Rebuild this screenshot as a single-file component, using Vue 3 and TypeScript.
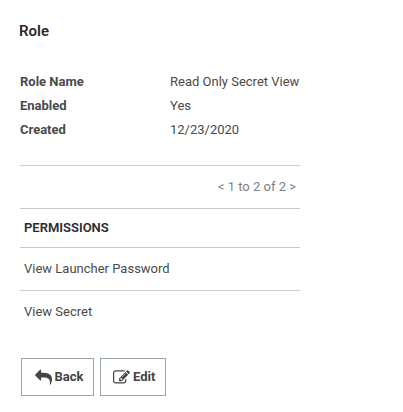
<script setup lang="ts">
interface Detail {
  label: string
  value: string
}

const details: Detail[] = [
  { label: 'Role Name', value: 'Read Only Secret View' },
  { label: 'Enabled', value: 'Yes' },
  { label: 'Created', value: '12/23/2020' },
]

const permissions: string[] = ['View Launcher Password', 'View Secret']
</script>

<template>
  <main class="page">
    <h1 class="title">Role</h1>

    <dl class="details">
      <div v-for="item in details" :key="item.label" class="detail">
        <dt>{{ item.label }}</dt>
        <dd>{{ item.value }}</dd>
      </div>
    </dl>

    <section class="grid">
      <div class="pager">&lt; 1 to 2 of 2 &gt;</div>
      <h2 class="head">PERMISSIONS</h2>
      <div v-for="name in permissions" :key="name" class="row">{{ name }}</div>
    </section>

    <div class="actions">
      <button type="button" class="btn back">
        <svg class="icon" viewBox="0 0 1792 1792" aria-hidden="true">
          <path d="M1792 1120q0 166-127 451-3 7-10.5 24t-13.5 30-13 22q-12 17-28 17-15 0-23.5-10t-8.5-25q0-9 2.5-26.5t2.5-23.5q5-68 5-123 0-101-17.500-181t-48.500-138.500-80-101-105.500-69.500-133-42.500-154-21.500-175.500-6h-224v256q0 26-19 45t-45 19-45-19l-512-512q-19-19-19-45t19-45l512-512q19-19 45-19t45 19 19 45v256h224q713 0 875 403 53 134 53 333z" />
        </svg>
        <span>Back</span>
      </button>
      <button type="button" class="btn edit">
        <svg class="icon" viewBox="0 0 1792 1792" aria-hidden="true">
          <path d="M888 1184l116-116-152-152-116 116v56h96v96h56zm440-720q-16-16-33 1l-350 350q-17 17-1 33t33-1l350-350q17-17 1-33zm80 594v190q0 119-84.500 203.500t-203.500 84.500h-832q-119 0-203.500-84.500t-84.500-203.500v-832q0-119 84.500-203.500t203.500-84.500h832q63 0 117 25 15 7 18 23 3 17-9 29l-49 49q-14 14-32 8-23-6-45-6h-832q-66 0-113 47t-47 113v832q0 66 47 113t113 47h832q66 0 113-47t47-113v-126q0-13 9-22l64-64q15-15 35-7t20 29zm-96-738l288 288-672 672h-288v-288zm444 132l-92 92-288-288 92-92q28-28 68-28t68 28l152 152q28 28 28 68t-28 68z" />
        </svg>
        <span>Edit</span>
      </button>
    </div>
  </main>
</template>

<style>
body {
  background: #fff;
}
</style>

<style scoped>
.page {
  box-sizing: border-box;
  padding: 20px 0 0 20px;
  width: 300px;
  font-family: Roboto, "Liberation Sans", sans-serif;
  font-size: 13px;
  color: #4a4a4a;
}

.title {
  margin: 0 0 0 -1px;
  font-size: 15px;
  line-height: 22px;
  font-weight: 600;
  color: #2b2b2b;
}

.details {
  margin: 28px 0 0;
}

.detail {
  display: grid;
  grid-template-columns: 150px 1fr;
  line-height: 24px;
  white-space: nowrap;
}

dt {
  font-weight: 700;
}

dd {
  margin: 0;
}

.grid {
  margin-top: 23px;
}

.pager,
.head,
.row {
  box-sizing: border-box;
  display: flex;
  align-items: center;
  border-top: 1px solid #ccc;
  padding: 0 4px 2px;
  height: 43px;
}

.pager {
  justify-content: flex-end;
  color: #808080;
}

.head {
  margin: 0;
  height: 39px;
  font-size: 13px;
  font-weight: 600;
  color: #2b2b2b;
}

.actions {
  display: flex;
  gap: 6px;
  padding: 25px 0 0 1px;
}

.btn {
  box-sizing: border-box;
  display: flex;
  align-items: center;
  border: 1px solid #98a4ae;
  padding: 0 0 0 12px;
  height: 38px;
  background: #fff;
  font: 700 13px/18px Roboto, "Liberation Sans", sans-serif;
  color: #444;
}

.back {
  width: 73px;
}

.edit {
  width: 66px;
}

.icon {
  flex: none;
  margin-right: 3px;
  width: 17px;
  height: 17px;
  fill: currentColor;
}

.back .icon {
  margin: 0 2.5px 0 1px;
}
</style>
